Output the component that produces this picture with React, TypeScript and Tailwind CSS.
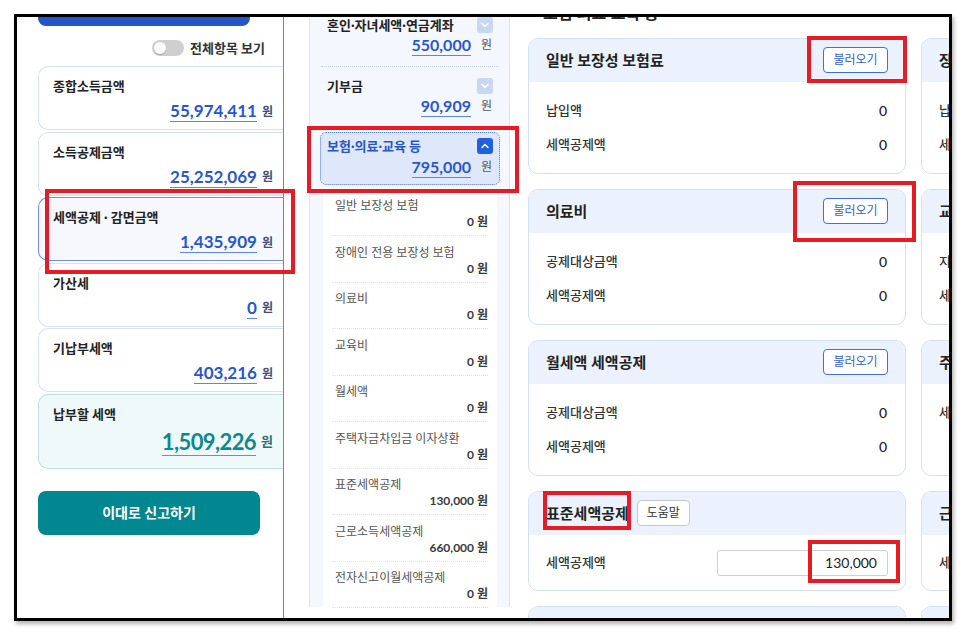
import { ChevronDown, ChevronUp } from "lucide-react";

const summaryCards = [
  { label: "종합소득금액", value: "55,974,411" },
  { label: "소득공제금액", value: "25,252,069" },
  { label: "세액공제 · 감면금액", value: "1,435,909", active: true },
  { label: "가산세", value: "0" },
  { label: "기납부세액", value: "403,216" },
];

const subItems = [
  { label: "일반 보장성 보험", value: "0" },
  { label: "장애인 전용 보장성 보험", value: "0" },
  { label: "의료비", value: "0" },
  { label: "교육비", value: "0" },
  { label: "월세액", value: "0" },
  { label: "주택자금차입금 이자상환", value: "0" },
  { label: "표준세액공제", value: "130,000" },
  { label: "근로소득세액공제", value: "660,000" },
  { label: "전자신고이월세액공제", value: "0" },
];

type DetailCard = {
  title: string;
  rows: { label: string; value: string }[];
  action?: "load" | "help";
  input?: boolean;
};

const detailCards: DetailCard[] = [
  { title: "일반 보장성 보험료", action: "load", rows: [{ label: "납입액", value: "0" }, { label: "세액공제액", value: "0" }] },
  { title: "장애인 전용 보장성 보험료", action: "load", rows: [{ label: "납입액", value: "0" }, { label: "세액공제액", value: "0" }] },
  { title: "의료비", action: "load", rows: [{ label: "공제대상금액", value: "0" }, { label: "세액공제액", value: "0" }] },
  { title: "교육비", action: "load", rows: [{ label: "지출액", value: "0" }, { label: "세액공제액", value: "0" }] },
  { title: "월세액 세액공제", action: "load", rows: [{ label: "공제대상금액", value: "0" }, { label: "세액공제액", value: "0" }] },
  { title: "주택자금차입금 이자상환", rows: [{ label: "세액공제액", value: "0" }] },
  { title: "표준세액공제", action: "help", input: true, rows: [{ label: "세액공제액", value: "130,000" }] },
  { title: "근로소득세액공제", input: true, rows: [{ label: "세액공제액", value: "660,000" }] },
  { title: "전자신고이월세액공제", rows: [] },
  { title: "기타", rows: [] },
];

function LeftColumn() {
  return (
    <div className="w-[267px] shrink-0 border-r border-[#5b84e4] bg-white">
      <div className="ml-[21px] h-[9px] w-[212px] rounded-b-[8px] bg-[#2456c8]" />

      <div className="mt-[14px] flex items-center justify-end gap-[6px] pr-[18px]">
        <span className="relative h-[16px] w-[32px] rounded-full bg-[#cfcfcf]">
          <span className="absolute left-[2px] top-[2px] h-[12px] w-[12px] rounded-full bg-white shadow-[0_1px_1px_rgba(0,0,0,0.2)]" />
        </span>
        <span className="text-[13px] font-bold leading-[16px] text-[#333]">전체항목 보기</span>
      </div>

      <div className="mt-[10px] ml-[21px] flex flex-col gap-[1.5px]">
        {summaryCards.map((card) => (
          <div
            key={card.label}
            className={`h-[64px] rounded-l-[10px] border border-r-0 pl-[14px] pr-[10px] pt-[10px] ${
              card.active ? "border-[#6b90e6] bg-[#f6f8fe]" : "border-[#d6e1f6] bg-white"
            }`}
          >
            <div className="text-[13px] font-bold leading-[18px] text-[#222]">{card.label}</div>
            <div className="mt-[6px] flex items-center justify-end gap-[5px]">
              <span className="border-b-[1.5px] border-[#5a86e8] text-[17px] font-bold leading-[20px] text-[#2756cf]">{card.value}</span>
              <span className="text-[12px] font-bold text-[#3f4d7c]">원</span>
            </div>
          </div>
        ))}
        <div className="h-[75px] rounded-l-[10px] border border-r-0 border-[#bfe0e3] bg-[#f0f9fa] pl-[14px] pr-[10px] pt-[10px]">
          <div className="text-[13px] font-bold leading-[18px] text-[#222]">납부할 세액</div>
          <div className="mt-[5px] flex items-center justify-end gap-[5px]">
            <span className="border-b-[1.5px] border-[#3fa9b0] text-[22px] font-bold leading-[27px] tracking-[-0.6px] text-[#0e8890]">1,509,226</span>
            <span className="text-[13px] font-bold text-[#2f6f74]">원</span>
          </div>
        </div>
      </div>

      <button className="mt-[22px] ml-[21px] flex h-[44px] w-[222px] items-center justify-center rounded-[8px] bg-[#00878f] text-[14px] font-bold text-white">
        이대로 신고하기
      </button>
    </div>
  );
}

function MiddleColumn() {
  return (
    <div className="w-[226px] shrink-0 bg-white pl-[25px]">
      <div className="h-full border-x border-[#dbe4f6] bg-[#f4f7fd] pl-[11px] pr-[10px]">
        <div className="-mt-[11px]">
          <div className="h-[61px] border-b border-dotted border-[#c3d1ee] px-[6px] pt-[10px]">
            <div className="flex items-center justify-between">
              <span className="text-[13px] font-bold leading-[18px] text-[#222]">혼인·자녀세액·연금계좌</span>
              <span className="flex h-[16px] w-[16px] items-center justify-center rounded-[3px] bg-[#c9d7f3]">
                <ChevronDown className="h-[12px] w-[12px] text-white" strokeWidth={3} />
              </span>
            </div>
            <div className="flex items-center justify-end gap-[10px] pr-[1px]">
              <span className="border-b border-[#5a86e8] text-[16px] font-bold leading-[21px] text-[#2756cf]">550,000</span>
              <span className="text-[12px] text-[#555]">원</span>
            </div>
          </div>

          <div className="h-[61px] px-[6px] pt-[10px]">
            <div className="flex items-center justify-between">
              <span className="text-[13px] font-bold leading-[18px] text-[#222]">기부금</span>
              <span className="flex h-[16px] w-[16px] items-center justify-center rounded-[3px] bg-[#c9d7f3]">
                <ChevronDown className="h-[12px] w-[12px] text-white" strokeWidth={3} />
              </span>
            </div>
            <div className="flex items-center justify-end gap-[10px] pr-[1px]">
              <span className="border-b border-[#5a86e8] text-[16px] font-bold leading-[21px] text-[#2756cf]">90,909</span>
              <span className="text-[12px] text-[#555]">원</span>
            </div>
          </div>

          <div className="-mx-[1px] mt-[4px] h-[53px] rounded-[6px] border border-dotted border-[#4a7be0] bg-[#dfe8fb] px-[6px] pt-[4px]">
            <div className="flex items-center justify-between">
              <span className="text-[13px] font-bold leading-[18px] text-[#2456c8]">보험·의료·교육 등</span>
              <span className="flex h-[16px] w-[16px] items-center justify-center rounded-[3px] bg-[#1f5fe0]">
                <ChevronUp className="h-[12px] w-[12px] text-white" strokeWidth={3} />
              </span>
            </div>
            <div className="mt-[1px] flex items-center justify-end gap-[10px] pr-[1px]">
              <span className="border-b border-[#5a86e8] text-[16px] font-bold leading-[21px] text-[#2756cf]">795,000</span>
              <span className="text-[12px] text-[#555]">원</span>
            </div>
          </div>

          <div className="mx-[2px] mt-[4.5px] bg-white">
            {subItems.map((item) => (
              <div key={item.label} className="mx-[9px] h-[46.5px] border-b border-dotted border-[#dfe4ee] pl-[3px] pt-[8.5px]">
                <div className="text-[12px] leading-[16px] text-[#555]">{item.label}</div>
                <div className="text-right text-[12px] font-bold leading-[16px] text-[#3a3a3a]">{item.value} 원</div>
              </div>
            ))}
          </div>
        </div>
      </div>
    </div>
  );
}

function Card({ card }: { card: DetailCard }) {
  return (
    <div className="overflow-hidden rounded-[10px] border border-[#d3e0f6] bg-white">
      <div className="flex h-[43px] items-center justify-between bg-[#ebf2fd] px-[17px]">
        <div className="flex items-center gap-[8px]">
          <span className="whitespace-nowrap text-[15px] font-bold text-[#222]">{card.title}</span>
          {card.action === "help" && (
            <button className="h-[26px] w-[53px] rounded-[4px] border border-[#c8c8c8] bg-white text-[12px] text-[#333]">도움말</button>
          )}
        </div>
        {card.action === "load" && (
          <button className="h-[26px] w-[65px] rounded-[4px] border border-[#3d6fe0] bg-white text-[12px] text-[#2f5fd6]">불러오기</button>
        )}
      </div>
      {card.input ? (
        <div className="flex items-center justify-between px-[17px] pb-[14px] pt-[15px]">
          <span className="text-[13px] font-medium text-[#333]">{card.rows[0].label}</span>
          <div className="flex h-[26px] w-[171px] items-center justify-end rounded-[3px] border border-[#cfcfcf] bg-white pr-[10px] text-[14px] text-[#222]">
            {card.rows[0].value}
          </div>
        </div>
      ) : (
        <div className="flex flex-col gap-[12px] pb-[17px] pl-[17px] pr-[18px] pt-[18px]">
          {card.rows.map((row) => (
            <div key={row.label} className="flex h-[22px] items-center justify-between">
              <span className="text-[13px] font-medium text-[#333]">{row.label}</span>
              <span className="text-[14px] font-medium text-[#222]">{row.value}</span>
            </div>
          ))}
        </div>
      )}
    </div>
  );
}

function RightColumn() {
  return (
    <div className="min-w-0 flex-1 overflow-hidden bg-white pl-[18px]">
      <div className="-mt-[14px] flex h-[20px] items-center gap-[6px]">
        <span className="ml-[1px] h-[8px] w-[8px] rounded-full bg-[#3a6de0]" />
        <span className="text-[16px] font-bold text-[#222]">보험·의료·교육 등</span>
      </div>
      <div className="mt-[14.5px] grid w-[771px] grid-cols-[378px_378px] gap-[15px]">
        {detailCards.map((card) => (
          <Card key={card.title} card={card} />
        ))}
      </div>
    </div>
  );
}

export default function App() {
  return (
    <div className="min-h-screen bg-white p-[14px] font-['Lato','Noto_Sans_CJK_KR',sans-serif]">
      <div className="relative flex h-[607px] w-[938px] overflow-hidden border-[3px] border-black bg-white shadow-[2px_3px_4px_rgba(0,0,0,0.3)]">
        <LeftColumn />
        <MiddleColumn />
        <RightColumn />

        {/* annotation boxes */}
        <div className="absolute left-[28px] top-[172px] h-[85px] w-[250px] border-[4px] border-[#e51c23]" />
        <div className="absolute left-[290px] top-[109px] h-[67px] w-[212px] border-[4px] border-[#e51c23]" />
        <div className="absolute left-[790px] top-[19px] h-[47px] w-[100px] border-[4px] border-[#e51c23]" />
        <div className="absolute left-[776px] top-[164px] h-[61px] w-[123px] border-[4px] border-[#e51c23]" />
        <div className="absolute left-[526px] top-[474px] h-[39px] w-[88px] border-[4px] border-[#e51c23]" />
        <div className="absolute left-[791px] top-[523px] h-[43px] w-[92px] border-[4px] border-[#e51c23]" />
      </div>
    </div>
  );
}
